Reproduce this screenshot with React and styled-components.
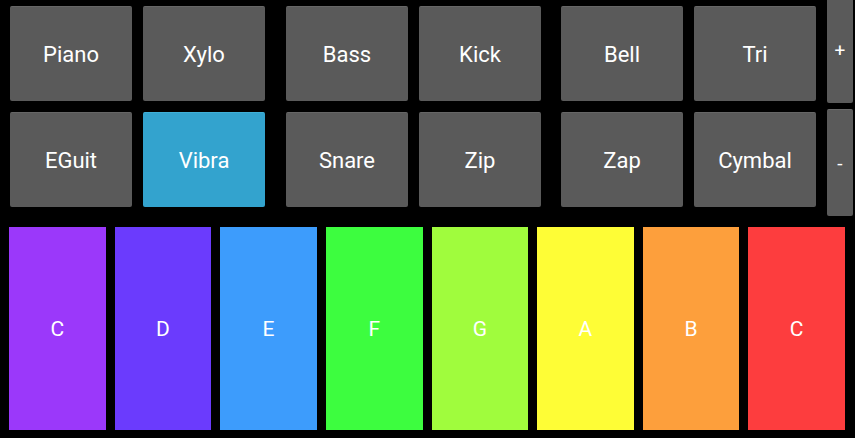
import React, {useState} from 'react'
import styled, {createGlobalStyle} from "styled-components"

const GlobalStyle = createGlobalStyle`
  html, body {
    margin: 0;
    padding: 0;
    background: #000;
    overflow: hidden;
  }
  body {
    font-family: Roboto, "Noto Sans", sans-serif;
  }
`

const instrumentGroups = [
	[["Piano", "EGuit"], ["Xylo", "Vibra"]],
	[["Bass", "Snare"], ["Kick", "Zip"]],
	[["Bell", "Zap"], ["Tri", "Cymbal"]],
]

const keys = [
	{note: "C", color: "#9b38fa"},
	{note: "D", color: "#6b3bfd"},
	{note: "E", color: "#3d9cfc"},
	{note: "F", color: "#3dfd3f"},
	{note: "G", color: "#a0fc3d"},
	{note: "A", color: "#fefd36"},
	{note: "B", color: "#fd9f3c"},
	{note: "C", color: "#fd3d3e"},
]

const App = () => {
	const [instrument, setInstrument] = useState("Vibra")

	return (
		<Wrapper>
			<GlobalStyle/>
			<Controls>
				{instrumentGroups.map((group, i) => (
					<Group key={i}>
						{group.map((column) => column.map((name) => (
							<PadButton
								key={name}
								type="button"
								$active={instrument === name}
								onClick={() => setInstrument(name)}
							>
								{name}
							</PadButton>
						)))}
					</Group>
				))}
				<SideColumn>
					<SideButton type="button">+</SideButton>
					<SideButton type="button">-</SideButton>
				</SideColumn>
			</Controls>
			<Keyboard>
				{keys.map((k, i) => (
					<Key key={i} type="button" $color={k.color}>{k.note}</Key>
				))}
			</Keyboard>
		</Wrapper>
	)
}

export default App

const Wrapper = styled.div`
  width: 855px;
  height: 438px;
  background: #000;
  overflow: hidden;
`

const Controls = styled.div`
  display: flex;
  align-items: flex-start;
  padding: 6px 0 0 10px;
`

const Group = styled.div`
  display: grid;
  grid-template-columns: 122px 122px;
  grid-template-rows: 95px 95px;
  grid-auto-flow: column;
  column-gap: 11px;
  row-gap: 11px;
  margin-right: 20px;

  &:first-child {
    margin-right: 21px;
  }

  &:nth-child(3) {
    margin-right: 11px;
  }
`

const PadButton = styled.button`
  background: ${({$active}) => $active ? "#33a3ce" : "#5a5a5a"};
  color: #fff;
  border: none;
  border-top: 1px solid ${({$active}) => $active ? "#3fb0d8" : "#666"};
  border-radius: 2px;
  box-shadow: 0 1px 1px rgba(0, 0, 0, 0.6);
  font-family: Roboto, sans-serif;
  font-size: 22px;
  font-weight: 400;
  padding: 0;
  cursor: pointer;
`

const SideButton = styled.button`
  width: 26px;
  height: 107px;
  background: #5a5a5a;
  color: #fff;
  border: none;
  border-top: 1px solid #6a6a6a;
  border-radius: 2px;
  font-family: Roboto, sans-serif;
  font-size: 19px;
  padding: 0;
  cursor: pointer;
`

const SideColumn = styled.div`
  display: flex;
  flex-direction: column;
  gap: 6px;
  margin-top: -10px;
`

const Keyboard = styled.div`
  display: flex;
  gap: 9px;
  padding: 0 10px 0 9px;
  margin-top: 11px;
  height: 203px;
`

const Key = styled.button`
  flex: 1;
  background: ${({$color}) => $color};
  color: #fff;
  border: none;
  border-radius: 0;
  font-family: Roboto, sans-serif;
  font-size: 21px;
  padding: 0;
  cursor: pointer;
`
